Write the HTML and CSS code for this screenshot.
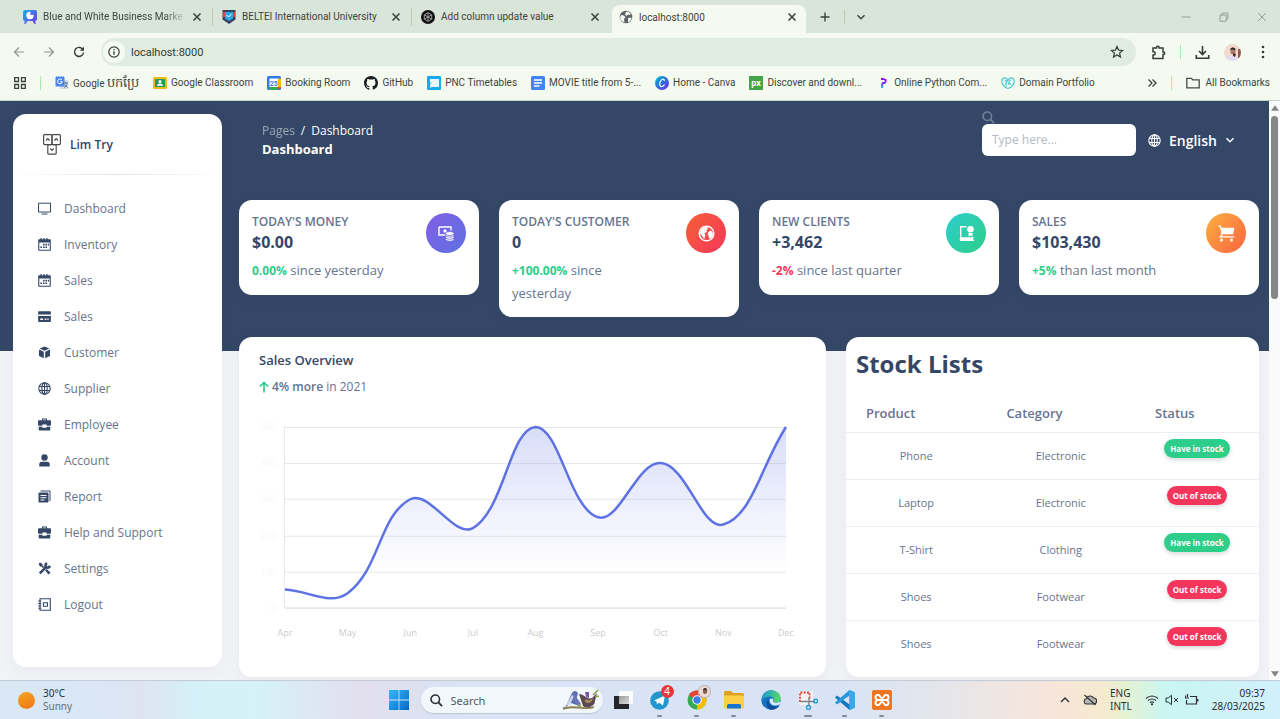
FILE: index.html
```html
<!DOCTYPE html>
<html lang="en">
<head>
    <meta charset="UTF-8">
    <meta name="viewport" content="width=device-width, initial-scale=1.0">
    <title>localhost:8000</title>
    <link rel="stylesheet" href="styles.css">
</head>
<body>

<!-- Shared icons -->
<svg class="sprite" aria-hidden="true">
    <symbol id="i-close" viewBox="0 0 10 10"><path d="M1.5 1.5l7 7M8.5 1.5l-7 7" fill="none" stroke="currentColor" stroke-width="1.6"/></symbol>
    <symbol id="i-chevron" viewBox="0 0 10 10"><path d="M1.5 3.2L5 6.7l3.5-3.5" fill="none" stroke="currentColor" stroke-width="1.5"/></symbol>
    <symbol id="i-calendar" viewBox="0 0 13 13"><path fill-rule="evenodd" d="M1 1.2h1.5V0h1.200v1.200h1.700V0h1.200v1.200h1.800V0h1.200v1.200H12a.8.8 0 0 1 .8.8v10a.8.8 0 0 1-.8.8H1a.8.8 0 0 1-.8-.8V2A.8.8 0 0 1 1 1.200zm.3 3.300v7.200h10.400V4.500z"/><path d="M5 5.800h1.600v1.600H5zM7.400 5.800H9v1.600H7.400zM9.800 5.800h1.300v1.600H9.800zM2.400 8.400H4V10H2.400zM5 8.400h1.600V10H5zM7.400 8.400H9V10H7.400z"/></symbol>
    <symbol id="i-globe" viewBox="0 0 13 13"><g fill="none" stroke="currentColor" stroke-width="1.1"><circle cx="6.5" cy="6.5" r="5.700"/><ellipse cx="6.5" cy="6.5" rx="2.700" ry="5.700"/><path d="M6.5.8v11.400M1 4.500h11M1 8.500h11"/></g></symbol>
    <symbol id="i-briefcase" viewBox="0 0 13 13"><path d="M4 2.200V.4h5v1.800h3a1 1 0 0 1 1 1v3.600a1 1 0 0 1-1 1H8.600V6.400H4.400v1.400H1a1 1 0 0 1-1-1V3.200a1 1 0 0 1 1-1zm1.100 0h2.800V1.400H5.100zM.7 8.800h3.700v1h4.200v-1h3.700v3a.8.8 0 0 1-.8.8h-10a.8.8 0 0 1-.8-.8z"/></symbol>
    <symbol id="i-search" viewBox="0 0 14 14"><circle cx="5.700" cy="5.700" r="4.600" fill="none" stroke="currentColor" stroke-width="1.700"/><path d="M9 9l4 4" stroke="currentColor" stroke-width="2"/></symbol>
</svg>

<!-- Browser window -->
<header class="browser">
    <div class="tab-strip">
        <div class="tab">
            <svg class="favicon" viewBox="0 0 14 14"><defs><linearGradient id="g-chart" x1="0" y1="0" x2="1" y2="1"><stop offset="0" stop-color="#12b5dc"/><stop offset="1" stop-color="#7a2ff0"/></linearGradient></defs><path d="M2 0h10a2 2 0 0 1 2 2v7a2 2 0 0 1-2 2l1 2.500-1.500.5L9.500 11H4.500l-2 3L1 13.500 2 11a2 2 0 0 1-2-2V2a2 2 0 0 1 2-2z" fill="url(#g-chart)"/><circle cx="7" cy="5.500" r="3.700" fill="#fff"/><path d="M7.400 1.500v3.600h3.600A3.700 3.700 0 0 0 7.400 1.500z" fill="#5a6df0"/></svg>
            <span class="tab-title faded-end">Blue and White Business Marke</span>
            <button class="icon-btn" aria-label="Close tab"><svg class="x"><use href="#i-close"/></svg></button>
        </div>
        <div class="tab">
            <svg class="favicon" viewBox="0 0 14 14"><path d="M.5 0h13v9.500L7 14 .5 9.500z" fill="#34425f"/><path d="M1 2h12v5H1z" fill="#e8413b"/><path d="M3 2h8v6.500L7 11 3 8.500z" fill="#36a3e4"/><path d="M4.500 5l2 2 3-3" fill="none" stroke="#fff"/></svg>
            <span class="tab-title">BELTEI International University</span>
            <button class="icon-btn" aria-label="Close tab"><svg class="x"><use href="#i-close"/></svg></button>
        </div>
        <div class="tab">
            <svg class="favicon" viewBox="0 0 14 14"><circle cx="7" cy="7" r="7" fill="#111"/><g fill="none" stroke="#b5b5b5" stroke-width=".8"><path d="M7 2.700l3.700 2.100v4.300L7 11.300 3.300 9.100V4.800z"/><path d="M7 2.700v4.300l3.700 2.100M3.300 4.800L7 7l-3.700 2.100M10.700 4.800L7 7v4.300"/></g></svg>
            <span class="tab-title">Add column update value</span>
            <button class="icon-btn" aria-label="Close tab"><svg class="x"><use href="#i-close"/></svg></button>
        </div>
        <div class="tab tab-active">
            <svg class="favicon" viewBox="0 0 14 14"><circle cx="7" cy="7" r="6.300" fill="#5c6268"/><path d="M2 5l3 .5 1.500 1.800L5 9l.5 3.500C3 12 1 9.500 1.200 7zM7 2l2-.6 3 2.600-1.500 1L9 4.500 7.500 6 6 4.500zM9 8l3.500-.5c0 2-1.500 4.300-3.500 5z" fill="#f4faf0"/></svg>
            <span class="tab-title">localhost:8000</span>
            <button class="icon-btn" aria-label="Close tab"><svg class="x"><use href="#i-close"/></svg></button>
        </div>
        <button class="icon-btn new-tab" aria-label="New tab"><svg viewBox="0 0 10 10"><path d="M5 .5v9M.5 5h9" stroke="currentColor" stroke-width="1.400"/></svg></button>
        <span class="tab-rule"></span>
        <button class="icon-btn tab-search" aria-label="Search tabs"><svg><use href="#i-chevron"/></svg></button>
        <div class="window-controls">
            <button class="icon-btn" aria-label="Minimize"><svg viewBox="0 0 10 10"><path d="M.5 5h9" stroke="currentColor" stroke-width=".9"/></svg></button>
            <button class="icon-btn" aria-label="Restore"><svg viewBox="0 0 10 10"><path d="M1 3h6.200v6.200H1zM3 3V1.400Q3 1 3.500 1H9v5.700q0 .5-.5.5H7.200" fill="none" stroke="currentColor" stroke-width=".9"/></svg></button>
            <button class="icon-btn" aria-label="Close"><svg viewBox="0 0 10 10"><path d="M1 1l8 8M9 1L1 9" stroke="currentColor" stroke-width=".9"/></svg></button>
        </div>
    </div>

    <div class="toolbar">
        <button class="icon-btn nav-btn faded" aria-label="Back"><svg viewBox="0 0 12 12"><path d="M6 1.500L1.500 6 6 10.500M1.500 6H11" fill="none" stroke="currentColor" stroke-width="1.200"/></svg></button>
        <button class="icon-btn nav-btn faded" aria-label="Forward"><svg viewBox="0 0 12 12"><path d="M6 1.500L10.500 6 6 10.500M10.500 6H1" fill="none" stroke="currentColor" stroke-width="1.200"/></svg></button>
        <button class="icon-btn nav-btn" aria-label="Reload"><svg viewBox="0 0 12 12"><path d="M10 3.800A4.500 4.500 0 1 0 10.500 6.500" fill="none" stroke="currentColor" stroke-width="1.400"/><path d="M11 .8v4H7z" fill="currentColor"/></svg></button>
        <div class="address-bar">
            <button class="icon-btn site-info" aria-label="Site information"><svg viewBox="0 0 12 12"><circle cx="6" cy="6" r="5.200" fill="none" stroke="currentColor" stroke-width="1.200"/><path d="M6 5.300v3.500M6 3v1.200" stroke="currentColor" stroke-width="1.300"/></svg></button>
            <input class="address" type="text" value="localhost:8000" aria-label="Address">
            <button class="icon-btn star" aria-label="Bookmark"><svg viewBox="0 0 14 14"><path d="M7 1.500l1.600 3.700 4 .3-3 2.600.9 3.900L7 9.900 3.500 12l.9-3.900-3-2.600 4-.3z" fill="none" stroke="currentColor" stroke-width="1.200"/></svg></button>
        </div>
        <button class="icon-btn tool" aria-label="Extensions"><svg viewBox="0 0 15 15"><path d="M2 3h3.500V2.500a1.300 1.300 0 0 1 2.600 0V3H12v4h.5a1.200 1.200 0 0 1 0 2.400H12V13.500H2V10h.6a1.500 1.500 0 0 0 0-3.200H2z" fill="none" stroke="currentColor" stroke-width="1.500"/></svg></button>
        <span class="green-rule"></span>
        <button class="icon-btn tool" aria-label="Downloads"><svg viewBox="0 0 15 15"><path d="M7.500 1v8M4 6l3.500 3.500L11 6M1.300 10v3.300h12.400V10" fill="none" stroke="currentColor" stroke-width="1.600"/></svg></button>
        <button class="icon-btn profile" aria-label="Profile"><svg viewBox="0 0 17 17"><defs><clipPath id="c-face"><circle cx="8.500" cy="8.500" r="8.500"/></clipPath></defs><g clip-path="url(#c-face)"><path d="M0 0h17v17H0z" fill="#f0d9cf"/><path d="M14 5h3v9h-3z" fill="#8c5a50"/><ellipse cx="9" cy="7" rx="2.600" ry="3.500" fill="#ad7b62"/><path d="M6 6C6 2.500 12 2.500 11.500 6L8 5.500z" fill="#332a2a"/><path d="M3 17c0-5 3-6 5.500-6s5 2 5 6z" fill="#e3def4"/><path d="M9 9l3 1-1 3-2-1z" fill="#4b302c"/></g></svg></button>
        <button class="icon-btn menu" aria-label="Menu"><svg viewBox="0 0 4 14"><g fill="currentColor"><circle cx="2" cy="2" r="1.300"/><circle cx="2" cy="7" r="1.300"/><circle cx="2" cy="12" r="1.300"/></g></svg></button>
    </div>

    <nav class="bookmarks">
        <button class="icon-btn apps" aria-label="Apps"><svg viewBox="0 0 12 12"><path d="M.7.7h3.800v3.800H.7zM7.500.7h3.800v3.800H7.500zM.7 7.500h3.800v3.800H.7zM7.500 7.500h3.800v3.800H7.500z" fill="none" stroke="currentColor" stroke-width="1.300"/></svg></button>
        <span class="green-rule"></span>
        <a class="bookmark" href="#"><svg viewBox="0 0 14 14"><rect x="5" y="4" width="8.500" height="9" rx="1" fill="#d6dbe2"/><rect x=".5" y=".5" width="9" height="10" rx="1" fill="#4a86ee"/><path d="M7 4A2.400 2.400 0 1 0 7.400 5.700H5.200" fill="none" stroke="#fff"/><path d="M8 7h5M10.500 6v1M9 11.500c1.500-.5 2.800-2 3-4.500M9.500 8.500l3 3" stroke="#4d6d96" fill="none" stroke-width=".9"/></svg><span>Google <span class="khmer" lang="km">បកប្រែ</span></span></a>
        <a class="bookmark" href="#"><svg viewBox="0 0 14 14"><rect y="1" width="14" height="12" rx="1" fill="#f2bb1b"/><rect x="2" y="3" width="10" height="8" fill="#249b5b"/><circle cx="7" cy="5.500" r="1.500" fill="#fff"/><path d="M4 9.700c0-3 6-3 6 0z" fill="#fff"/></svg>Google Classroom</a>
        <a class="bookmark" href="#"><svg viewBox="0 0 14 14"><rect width="14" height="14" rx="1.500" fill="#2f7cec"/><path d="M11 2.500h3V11h-3z" fill="#fbbc05"/><path d="M2.500 11H11v3H2.500z" fill="#34a853"/><path d="M11 11h3l-3 3z" fill="#ea4335"/><path d="M2.500 2.500H11V11H2.500z" fill="#fff"/><text x="6.800" y="9.500" text-anchor="middle" class="cal-text">25</text></svg>Booking Room</a>
        <a class="bookmark" href="#"><svg viewBox="0 0 16 16"><path fill="#1b1f23" d="M8 0C3.580 0 0 3.580 0 8c0 3.540 2.290 6.530 5.470 7.590.4.070.55-.17.55-.38v-1.490c-2.010.37-2.530-.49-2.690-.94-.09-.23-.48-.94-.82-1.130-.28-.15-.68-.52-.01-.53.63-.01 1.080.58 1.230.82.720 1.210 1.870.87 2.330.66.070-.52.280-.87.510-1.070-1.780-.2-3.640-.89-3.640-3.950 0-.87.310-1.590.82-2.150-.08-.2-.36-1.020.08-2.120 0 0 .67-.21 2.200.82a7.600 7.600 0 0 1 4 0c1.530-1.040 2.200-.82 2.200-.82.440 1.100.160 1.920.080 2.120.510.560.820 1.270.820 2.150 0 3.070-1.870 3.750-3.650 3.950.290.250.540.730.540 1.480v2.200c0 .210.150.460.550.380A8 8 0 0 0 16 8c0-4.420-3.580-8-8-8z"/></svg>GitHub</a>
        <a class="bookmark" href="#"><svg viewBox="0 0 14 14"><rect width="14" height="14" rx="1" fill="#19a9ee"/><path d="M3 3h9v8H5l-2 1 .5-3H3V7.500h2L3 6z" fill="#e9f7ff"/></svg>PNC Timetables</a>
        <a class="bookmark" href="#"><svg viewBox="0 0 14 14"><rect width="14" height="14" rx="1.500" fill="#4285f4"/><path d="M3 4h8M3 7h8M3 10h5.500" stroke="#fff" stroke-width="1.400"/></svg>MOVIE title from 5-...</a>
        <a class="bookmark" href="#"><svg viewBox="0 0 14 14"><defs><linearGradient id="g-canva" x1="0" y1="0" x2="1" y2="1"><stop offset="0" stop-color="#00c4cc"/><stop offset=".5" stop-color="#2b6fe0"/><stop offset="1" stop-color="#7d2ae8"/></linearGradient></defs><circle cx="7" cy="7" r="7" fill="url(#g-canva)"/><path d="M9 5c1-2-1.500-2.500-3-.5S4 10 6 10.500s3-1 3.500-2" fill="none" stroke="#fff" stroke-width="1.200"/></svg>Home - Canva</a>
        <a class="bookmark" href="#"><svg viewBox="0 0 14 14"><rect width="14" height="14" fill="#43a547"/><text x="7" y="9.500" text-anchor="middle" class="px-text">px</text></svg>Discover and downl...</a>
        <a class="bookmark" href="#"><svg viewBox="0 0 14 14"><defs><linearGradient id="g-py" x1="0" y1="0" x2="0" y2="1"><stop offset=".4" stop-color="#8a18ee"/><stop offset="1" stop-color="#2bc0ff"/></linearGradient></defs><path d="M5 2h3.500v2H5zM8.500 3h2v3.500h-2zM6 6h3.500v2H6zM5 7.500h2.200V12H5z" fill="url(#g-py)"/></svg>Online Python Com...</a>
        <a class="bookmark" href="#"><svg viewBox="0 0 14 14"><path d="M7 4C4.500.5 1 1.500.8 5c0 4 3.500 6.500 6.200 7.500 2.700-1 6.200-3.500 6.200-7.500C13 1.500 9.500.5 7 4zm0 0C4.500 7 4.500 9 5.500 10.500M10 4C8.500 4.500 7.500 6.500 7.500 8h2.500M7 4L3.500 5" fill="none" stroke="#52cdd2" stroke-width="1.300"/></svg>Domain Portfolio</a>
        <button class="icon-btn more" aria-label="More bookmarks"><svg viewBox="0 0 10 10"><path d="M1.500 1.500L5 5 1.500 8.500M5.500 1.500L9 5 5.500 8.500" fill="none" stroke="currentColor" stroke-width="1.300"/></svg></button>
        <span class="green-rule"></span>
        <a class="bookmark all" href="#"><svg viewBox="0 0 14 14"><path d="M.8 2.300h4.500l1.500 1.500h6.400v8H.8z" fill="none" stroke="#454d45" stroke-width="1.300"/></svg>All Bookmarks</a>
    </nav>
</header>

<!-- Dashboard page -->
<div class="viewport">
    <div class="page">
        <aside class="sidebar">
            <a class="brand" href="#">
                <svg viewBox="0 0 18 21"><g fill="none" stroke="#4a4a4a" stroke-width="1.200"><rect x=".6" y=".6" width="8.400" height="10" rx="1"/><rect x="9" y=".6" width="8.400" height="10" rx="1"/><rect x="4.800" y="10.600" width="8.400" height="9.600" rx="1"/><path d="M3 6.500L4.800 4.700l1.800 1.800M11.400 6.500l1.800-1.800L15 6.500M7.200 14.500L9 16.300l1.800-1.800"/></g></svg>
                <span>Lim Try</span>
            </a>
            <hr class="divider">
            <nav class="menu-list">
                <a href="#"><svg viewBox="0 0 13 13"><path d="M.5 1.200h12v8.800H.5z" fill="none" stroke="currentColor"/><path d="M3.500 12h6" stroke="currentColor"/></svg>Dashboard</a>
                <a href="#"><svg><use href="#i-calendar"/></svg>Inventory</a>
                <a href="#"><svg><use href="#i-calendar"/></svg>Sales</a>
                <a href="#"><svg viewBox="0 0 13 13"><path fill-rule="evenodd" d="M1 1.200h11a.9.9 0 0 1 .9.9V4.500H.1V2.100a.9.9 0 0 1 .9-.9zM.1 6h12.800v5a.9.9 0 0 1-.9.9H1a.9.9 0 0 1-.9-.9zM2.200 8.500V10h3V8.500zm4.600 0V10h1.600V8.500zm2.600 0V10h1.200V8.500z"/></svg>Sales</a>
                <a href="#"><svg viewBox="0 0 13 13"><path d="M6.500.5l4.800 2L6.500 4.700 1.700 2.500zM1 3.600l4.800 2.200v6.500L1 10zM12 3.600L7.200 5.800v6.500L12 10z"/></svg>Customer</a>
                <a href="#"><svg><use href="#i-globe"/></svg>Supplier</a>
                <a href="#"><svg><use href="#i-briefcase"/></svg>Employee</a>
                <a href="#"><svg viewBox="0 0 13 13"><circle cx="6.500" cy="3.500" r="3.200"/><path d="M1.300 12.500V10.300q0-2.500 2.500-2.500h5.400q2.500 0 2.500 2.500v2.200z"/></svg>Account</a>
                <a href="#"><svg viewBox="0 0 13 13"><path fill-rule="evenodd" d="M1.500 2.500h8a1 1 0 0 1 1 1v8a1 1 0 0 1-1 1h-8a1 1 0 0 1-1-1v-8a1 1 0 0 1 1-1zM2.500 5v1h6V5zm0 2.200v1h6v-1zm0 2.200v1h4v-1z"/><path d="M2.500 1H12v10" fill="none" stroke="currentColor"/></svg>Report</a>
                <a href="#"><svg><use href="#i-briefcase"/></svg>Help and Support</a>
                <a href="#"><svg viewBox="0 0 13 13"><path d="M1.800 11.300l6-6M9 1.200a3 3 0 0 0-1 4 3 3 0 0 0 4-1.300" fill="none" stroke="currentColor" stroke-width="2.600"/><path d="M.6 2L2 .6 4.400 2l.2 1.600L6.300 5 5 6.300 3.600 4.600 2 4.400zM7.200 8.500l1.400-1.400 3.900 3.300-2 2.100z"/></svg>Settings</a>
                <a href="#"><svg viewBox="0 0 13 13"><path d="M2 .7h10.300v11.600H2zM5.500 4.700h4v3.600h-4zM.3 3h3M.3 5.500h3M.3 8h3M.3 10.300h3" fill="none" stroke="currentColor" stroke-width="1.100"/></svg>Logout</a>
            </nav>
        </aside>

        <main class="content">
            <div class="topbar">
                <div class="crumbs">
                    <p><a href="#">Pages</a><span>/</span>Dashboard</p>
                    <h1>Dashboard</h1>
                </div>
                <div class="search-box">
                    <label for="page-search" aria-label="Search"><svg><use href="#i-search"/></svg></label>
                    <input id="page-search" type="text" placeholder="Type here...">
                </div>
                <div class="language">
                    <svg class="lang-globe"><use href="#i-globe"/></svg>
                    <select aria-label="Language"><option>English</option></select>
                    <svg class="lang-chevron"><use href="#i-chevron"/></svg>
                </div>
            </div>

            <section class="stats">
                <article class="card stat">
                    <div class="stat-text">
                        <h2>TODAY'S MONEY</h2>
                        <strong>$0.00</strong>
                        <p><b class="up">0.00%</b> since yesterday</p>
                    </div>
                    <span class="stat-icon purple"><svg viewBox="0 0 17 17"><path d="M1 2h12v3.500M7 10H1V2" fill="none" stroke="#fff" stroke-width="1.400"/><circle cx="7" cy="6" r="1.700" fill="#fff"/><g fill="#fff" stroke="#6a66e4" stroke-width=".8"><path d="M7.500 13.500v1c0 2.300 8.500 2.300 8.500 0v-1z"/><path d="M7.500 10.500v2c0 2.300 8.500 2.300 8.500 0v-2z"/><path d="M7.500 8.800v1.500c0 2.300 8.500 2.300 8.500 0V8.800z"/><ellipse cx="11.750" cy="8.500" rx="4.250" ry="2"/></g></svg></span>
                </article>
                <article class="card stat">
                    <div class="stat-text">
                        <h2>TODAY'S CUSTOMER</h2>
                        <strong>0</strong>
                        <p><b class="up">+100.00%</b> since yesterday</p>
                    </div>
                    <span class="stat-icon red"><svg viewBox="0 0 17 17"><circle cx="8.500" cy="8.500" r="7.300" fill="none" stroke="#fff" stroke-width="1.400"/><path d="M6 2.500l3-1 1 2-1.500 2 .5 1.500-2.500 1 .8 2.500-1 3.500-2-2.500L1.800 8 3 4.500zM10.500 7l2-1.500L14.500 7l.5 3-2.500 4-1.500-1-.5-2.500-1-1.500z" fill="#fff"/></svg></span>
                </article>
                <article class="card stat">
                    <div class="stat-text">
                        <h2>NEW CLIENTS</h2>
                        <strong>+3,462</strong>
                        <p><b class="down">-2%</b> since last quarter</p>
                    </div>
                    <span class="stat-icon green"><svg viewBox="0 0 17 17"><path d="M8.500 1.700H2.700v11.800" fill="none" stroke="#fff" stroke-width="1.400"/><path d="M3.500 12.300h12.300v1H15v1.200h.8V16H3.500a1.850 1.850 0 0 1 0-3.700z" fill="#fff"/><circle cx="12.500" cy="4.200" r="3.300" fill="#fff"/><path d="M10.500 8h4v3.500l-2-1-2 1z" fill="#fff"/></svg></span>
                </article>
                <article class="card stat">
                    <div class="stat-text">
                        <h2>SALES</h2>
                        <strong>$103,430</strong>
                        <p><b class="up">+5%</b> than last month</p>
                    </div>
                    <span class="stat-icon orange"><svg viewBox="0 0 17 17"><path d="M2.800 2.800h13.500l-1.200 6.500H4z" fill="#fff"/><path d="M.3 1.200h2.200l1.700 8.300-2 2.300h14" fill="none" stroke="#fff" stroke-width="1.200"/><circle cx="3.500" cy="15" r="1.500" fill="#fff"/><circle cx="13.500" cy="15" r="1.500" fill="#fff"/></svg></span>
                </article>
            </section>

            <section class="panels">
                <article class="card overview">
                    <h2>Sales Overview</h2>
                    <p><svg viewBox="0 0 10 12"><path d="M5 11.500V1.500M1 5.500l4-4 4 4" fill="none" stroke="#2dce89" stroke-width="1.700"/></svg><b>4% more</b> in 2021</p>
                    <svg id="chart" class="chart" viewBox="0 0 548 230" role="img" aria-label="Sales by month">
                        <defs><linearGradient id="g-area" x1="0" y1="0" x2="0" y2="1"><stop offset="0" stop-color="#5e72e4" stop-opacity=".24"/><stop offset=".8" stop-color="#5e72e4" stop-opacity="0"/></linearGradient></defs>
                    </svg>
                </article>

                <article class="card stock">
                    <h2>Stock Lists</h2>
                    <table>
                        <thead>
                            <tr><th>Product</th><th>Category</th><th>Status</th></tr>
                        </thead>
                        <tbody>
                            <tr><td>Phone</td><td>Electronic</td><td><span class="badge in">Have in stock</span></td></tr>
                            <tr><td>Laptop</td><td>Electronic</td><td><span class="badge out">Out of stock</span></td></tr>
                            <tr><td>T-Shirt</td><td>Clothing</td><td><span class="badge in">Have in stock</span></td></tr>
                            <tr><td>Shoes</td><td>Footwear</td><td><span class="badge out">Out of stock</span></td></tr>
                            <tr><td>Shoes</td><td>Footwear</td><td><span class="badge out">Out of stock</span></td></tr>
                        </tbody>
                    </table>
                </article>
            </section>
        </main>
    </div>
    <div class="scrollbar">
        <svg viewBox="0 0 9 6"><path d="M4.500 0L9 6H0z"/></svg>
        <span class="thumb"></span>
        <svg viewBox="0 0 9 6"><path d="M4.500 6L9 0H0z"/></svg>
    </div>
</div>

<!-- Taskbar -->
<footer class="taskbar">
    <div class="weather">
        <span class="sun"></span>
        <p>30°C<br><span>Sunny</span></p>
    </div>
    <div class="apps-row">
        <button class="icon-btn app" aria-label="Start"><svg viewBox="0 0 20 20"><defs><linearGradient id="g-win" x1="0" y1="0" x2="1" y2="1"><stop offset="0" stop-color="#35b8f4"/><stop offset="1" stop-color="#0568c9"/></linearGradient></defs><path d="M0 0h9.600v9.600H0zM10.400 0H20v9.600h-9.600zM0 10.400h9.600V20H0zM10.400 10.400H20V20h-9.600z" fill="url(#g-win)"/></svg></button>
        <div class="task-search">
            <svg class="lens"><use href="#i-search"/></svg>
            <input type="text" placeholder="Search" aria-label="Search">
            <svg class="bird" viewBox="0 0 40 22"><path d="M1 19l6-2 5-11c2-5 5-5 7-2l-2 7 3 6-8-3-4 3z" fill="#5a6fae"/><path d="M7 16l6-10 2 1-4 9z" fill="#cfd6ec"/><path d="M14 3l8 12-2 3-5-6z" fill="#6b76b8"/><path d="M4 20c8-5 22 2 31-2" fill="none" stroke="#8a7a4c" stroke-width="1.800"/><path d="M20 5c6 0 7 6 13 4l5-5-2 8c0 6-9 8-12 5z" fill="#5b4a52"/><path d="M26 10c3 2 6 1 8-1-1 5-5 6-8 4z" fill="#a58a63"/><path d="M26 3h4v6l-3-1z" fill="#7b58a6"/><path d="M34 6l5-5M36 8l4-1M19 15l5 5" stroke="#8fa24b" stroke-width="1.500"/></svg>
        </div>
        <button class="icon-btn app" aria-label="Task view"><svg viewBox="0 0 20 20"><defs><linearGradient id="g-task" x1="0" y1="0" x2="1" y2="1"><stop offset="0" stop-color="#999"/><stop offset="1" stop-color="#ddd"/></linearGradient></defs><path d="M6 1h14v13H6z" fill="#fbfbfb"/><path d="M1 6h15v13H1z" fill="#25262a"/><path d="M6 6h10v8H6z" fill="url(#g-task)"/></svg></button>
        <button class="icon-btn app open" aria-label="Telegram"><svg viewBox="0 0 20 20"><circle cx="9.500" cy="10.500" r="9.300" fill="#2196cf"/><path d="M4 10.500l11-5-2 10-4-3-2 2-.5-3z" fill="#fff"/></svg><span class="count">4</span></button>
        <button class="icon-btn app open" aria-label="Chrome"><svg viewBox="0 0 20 20"><circle cx="10" cy="10" r="9.500" fill="#34a853"/><path d="M10 10L1.800 5.200A9.500 9.500 0 0 1 18.200 5.200z" fill="#ea4335"/><path d="M10 10l8.200-4.800A9.500 9.500 0 0 1 10 19.500z" fill="#fbbc05"/><circle cx="10" cy="10" r="4.700" fill="#fff"/><circle cx="10" cy="10" r="3.700" fill="#3b7ded"/></svg><svg class="mini-face" viewBox="0 0 12 12"><circle cx="6" cy="6" r="5.600" fill="#eadbd4" stroke="#bdb8ba"/><ellipse cx="6.500" cy="5.500" rx="2" ry="2.800" fill="#86604e"/><path d="M4.500 4.500q2-3.500 4 0z" fill="#333"/></svg></button>
        <button class="icon-btn app open" aria-label="File Explorer"><svg viewBox="0 0 20 20"><path d="M0 2.500q0-1.500 1.500-1.500H7l2 2h9.500Q20 3 20 4.500V8H0z" fill="#dfa11e"/><path d="M0 6.500q0-1 1-1h18q1 0 1 1V17q0 1.500-1.500 1.500h-17Q0 18.500 0 17z" fill="#fdce4a"/><path d="M3 18.500v-3q0-1.500 1.500-1.500h11q1.500 0 1.500 1.500v3z" fill="#1874cd"/></svg></button>
        <button class="icon-btn app" aria-label="Edge"><svg viewBox="0 0 20 20"><defs><linearGradient id="g-edge" x1="0" y1="0" x2="1" y2=".3"><stop offset="0" stop-color="#1796dc"/><stop offset="1" stop-color="#55d66a"/></linearGradient></defs><circle cx="10" cy="10" r="9.700" fill="#1272c4"/><path d="M.4 10C1 4 5.500.3 10.500.3c5 0 9.200 3.700 9.200 7.700 0 3-2.200 4.700-5 4.700-1.800 0-3-.7-2.300-1.700C13.600 9 12 6.500 9 6.500c-4 0-7.500 2-8.600 3.500z" fill="url(#g-edge)"/><path d="M8.500 9c-2 3 1 8 6 7.500 2 0 3-.5 4-1-2 3.500-6 4.600-9 4.200-5-2-5-8.700-1-10.700z" fill="#0d4f9d"/><path d="M8.700 9.200C9.500 8.300 12 8 12.300 9.500c.2 1.200-.9 1.500.2 2.600 1.500 1 4.300.7 6-.7l1.200 1.600c-2 3-8 3.500-10 .8-1-1.400-1.400-3.200-1-4.600z" fill="#d8e7f5"/></svg></button>
        <button class="icon-btn app open wide" aria-label="Snipping Tool"><svg viewBox="0 0 20 20"><path d="M1 1h14v14H1z" fill="#f3f1f2"/><path d="M2 12V2.500h9.500V9" fill="none" stroke="#e2413b" stroke-width="1.800" stroke-dasharray="2 1.300"/><path d="M3 11.500h14M11 8v8" stroke="#7e8288" stroke-width="1.400"/><circle cx="10.500" cy="17.500" r="2" fill="none" stroke="#219bd7" stroke-width="1.400"/><circle cx="17.700" cy="11" r="1.900" fill="none" stroke="#219bd7" stroke-width="1.400"/></svg></button>
        <button class="icon-btn app open" aria-label="Visual Studio Code"><svg viewBox="0 0 20 20"><path d="M14.500 0L20 2.500v15L14.500 20 0 7.500 2 5.500l12.500 9z" fill="#1477bd"/><path d="M14.500 0L0 12.500l2 2 12.500-9z" fill="#2699dd"/><path d="M14.500 0L20 2.500v15L14.500 20z" fill="#3aa8ec"/></svg></button>
        <button class="icon-btn app open" aria-label="XAMPP"><svg viewBox="0 0 20 20"><rect width="20" height="20" rx="2" fill="#ee7623"/><path d="M6.500 10h7M6.500 10C2 10 3 4 6.500 5c2 .6 1.500 3 3.500 3s1.500-2.400 3.500-3c3.500-1 4.500 5 0 5 4.500 0 3.500 6 0 5-2-.6-1.500-3-3.500-3s-1.500 2.400-3.500 3c-3.500 1-4.500-5 0-5z" fill="none" stroke="#fff" stroke-width="2"/></svg></button>
    </div>
    <div class="tray">
        <button class="icon-btn" aria-label="Hidden icons"><svg class="up-arrow" viewBox="0 0 10 10"><path d="M1 7l4-4 4 4" fill="none" stroke="currentColor" stroke-width="1.300"/></svg></button>
        <svg class="cloud" viewBox="0 0 14 12"><path d="M3.500 10a2.700 2.700 0 0 1-.3-5.300A4 4 0 0 1 10.500 4a3 3 0 0 1 .3 6z" fill="#b5b5b2" stroke="#333" stroke-width="1.100"/><path d="M1.500 1l11 10" stroke="#333" stroke-width="1.200"/></svg>
        <p class="lang">ENG<br>INTL</p>
        <div class="status">
            <svg viewBox="0 0 14 12"><path d="M1 4.500a8.500 8.500 0 0 1 12 0M3 6.700a5.700 5.700 0 0 1 8 0M5 8.700a2.800 2.800 0 0 1 4 0" fill="none" stroke="currentColor" stroke-width="1.100"/><circle cx="7" cy="10.300" r="1.100" fill="currentColor"/></svg>
            <svg viewBox="0 0 14 12"><path d="M1 4h2.200L6.500 1.300v9.400L3.200 8H1zM9 4l4 4M13 4L9 8" fill="none" stroke="currentColor"/></svg>
            <svg viewBox="0 0 14 12"><path d="M5 2.500h6.500v7.500h-10V6M12.800 5v2.500M2.500 0v3M.5 1.500v2.500h3.500" fill="none" stroke="currentColor" stroke-width="1.200"/></svg>
        </div>
        <p class="clock">09:37<br>28/03/2025</p>
    </div>
</footer>

<script src="script.js"></script>
</body>
</html>
```

FILE: styles.css
```css
/* Reset */
*, *::before, *::after {
    margin: 0;
    padding: 0;
    box-sizing: border-box;
}

:root {
    --navy: #344767;
    --slate: #67748e;
    --green: #2dce89;
    --red: #f5365c;
    --page: #f1f3f6;
    --tabs: #dae5da;
    --toolbar: #f4faf0;
    --address: #e1ece0;
}

body {
    display: flex;
    flex-direction: column;
    height: 100vh;
    overflow: hidden;
    font-family: "Open Sans", sans-serif;
    color: var(--slate);
}

a {
    color: inherit;
    text-decoration: none;
}

svg {
    flex: none;
    fill: currentColor;
}

input, select, button {
    font: inherit;
    color: inherit;
    background: none;
    border: none;
    outline: none;
}

.sprite {
    display: none;
}

.icon-btn {
    display: flex;
    align-items: center;
    justify-content: center;
    flex: none;
    cursor: pointer;
}

/* Browser window */
.browser {
    flex: none;
    font-family: Roboto, "Noto Sans", sans-serif;
    font-size: 10px;
    color: #3c443c;
    background: var(--toolbar);
    border-bottom: 1px solid #c6d3cb;
}

.tab-strip {
    display: flex;
    align-items: center;
    height: 33px;
    padding-left: 14px;
    background: var(--tabs);
}

.tab {
    display: flex;
    align-items: center;
    gap: 6px;
    width: 199px;
    height: 18px;
    padding: 0 10px 0 9px;
    border-right: 1px solid #bccabc;
}

.tab:nth-child(3) {
    border-right-color: transparent;
}

.tab-active {
    align-self: flex-end;
    width: 194px;
    height: 28px;
    margin-left: 1px;
    padding: 0 9px 4px 7px;
    background: var(--toolbar);
    border: none;
    border-radius: 8px 8px 0 0;
}

.favicon {
    width: 14px;
    height: 14px;
}

.tab-title {
    flex: 1;
    white-space: nowrap;
}

.faded-end {
    mask-image: linear-gradient(90deg, #000 85%, transparent);
}

.x {
    width: 10px;
    height: 10px;
}

.new-tab {
    width: 38px;
}

.new-tab svg, .tab-search svg {
    width: 10px;
    height: 10px;
}

.tab-rule {
    width: 1px;
    height: 14px;
    background: #bccabc;
}

.tab-search {
    width: 32px;
}

.window-controls {
    display: flex;
    gap: 28px;
    margin-left: auto;
    padding-right: 13px;
    color: #8d968d;
}

.window-controls svg {
    width: 10px;
    height: 10px;
}

.toolbar {
    display: flex;
    align-items: center;
    height: 38px;
    padding: 0 15px 0 4px;
    color: #333c33;
}

.nav-btn {
    width: 30px;
}

.nav-btn svg {
    width: 12px;
    height: 12px;
}

.faded {
    color: #8f988f;
}

.address-bar {
    display: flex;
    align-items: center;
    flex: 1;
    height: 28px;
    margin: 0 15px 0 7px;
    padding: 0 12px 0 2px;
    border-radius: 14px;
    background: var(--address);
    font-size: 11px;
}

.site-info {
    width: 22px;
    height: 22px;
    border-radius: 50%;
    background: var(--toolbar);
}

.site-info svg {
    width: 12px;
    height: 12px;
}

.address {
    flex: 1;
    min-width: 0;
    padding: 0 6px;
}

.star svg {
    width: 14px;
    height: 14px;
}

.tool svg {
    width: 15px;
    height: 15px;
}

.green-rule {
    flex: none;
    width: 1px;
    height: 14px;
    background: #a5eeb0;
}

.toolbar .green-rule {
    margin: 0 14px;
}

.profile {
    margin: 0 20px 0 14px;
}

.profile svg {
    width: 17px;
    height: 17px;
}

.menu svg {
    width: 4px;
    height: 14px;
}

.bookmarks {
    display: flex;
    align-items: center;
    gap: 14px;
    height: 29px;
    padding: 0 10px 5px 14px;
    white-space: nowrap;
}

.bookmark {
    display: flex;
    align-items: center;
    gap: 4px;
    line-height: 14px;
}

.bookmark svg {
    width: 14px;
    height: 14px;
}

.khmer {
    font-size: 13px;
}

.cal-text {
    font-size: 7px;
    font-weight: 700;
    fill: #2f7cec;
}

.px-text {
    font-size: 9px;
    font-weight: 700;
    fill: #ffffff;
}

.apps svg {
    width: 12px;
    height: 12px;
}

.more {
    margin-left: auto;
}

.more svg {
    width: 10px;
    height: 10px;
}

.all {
    gap: 6px;
}

/* Page */
.viewport {
    display: flex;
    flex: 1;
    min-height: 0;
    overflow: hidden;
}

.page {
    display: flex;
    flex: 1;
    min-width: 0;
    gap: 17px;
    padding: 13px 10px 13px 13px;
    background: linear-gradient(var(--navy) 250px, var(--page) 250px);
}

.scrollbar {
    display: flex;
    flex-direction: column;
    align-items: center;
    width: 11px;
    padding: 4px 0 3px;
    background: #fafafa;
    color: #858585;
}

.scrollbar svg {
    width: 8px;
    height: 6px;
}

.thumb {
    width: 7px;
    height: 32%;
    margin: 5px 0 auto;
    border-radius: 4px;
    background: #858585;
}

.card {
    border-radius: 13px;
    background: #ffffff;
    box-shadow: 0 4px 16px rgba(50, 60, 80, 0.05);
}

/* Sidebar */
.sidebar {
    flex: none;
    width: 209px;
    border-radius: 13px;
    background: #ffffff;
    box-shadow: 0 4px 16px rgba(50, 60, 80, 0.05);
    overflow: hidden;
}

.brand {
    display: flex;
    align-items: center;
    gap: 9px;
    height: 60px;
    padding-left: 30px;
    color: var(--navy);
    font-size: 12px;
    font-weight: 600;
}

.brand svg {
    width: 18px;
    height: 21px;
}

.divider {
    height: 1px;
    border: none;
    background: linear-gradient(90deg, transparent, #dfe2e6, transparent);
}

.menu-list {
    padding: 15px 0 0 25px;
}

.menu-list a {
    display: flex;
    align-items: center;
    gap: 13px;
    height: 36px;
    font-size: 12px;
}

.menu-list svg {
    width: 13px;
    height: 13px;
    color: var(--navy);
}

/* Topbar */
.content {
    flex: 1;
    min-width: 0;
}

.topbar {
    display: flex;
    align-items: center;
    height: 86px;
    padding: 0 24px 34px 23px;
    color: #ffffff;
}

.crumbs {
    flex: 1;
    font-size: 12px;
    line-height: 19px;
}

.crumbs a {
    opacity: 0.5;
}

.crumbs span {
    padding: 0 6px;
}

.crumbs h1 {
    font-size: 13px;
    font-weight: 700;
}

.search-box {
    display: flex;
    flex-direction: column;
    width: 154px;
    padding-bottom: 14px;
}

.search-box label {
    height: 13px;
    color: #73809a;
}

.search-box svg {
    display: block;
    width: 13px;
    height: 13px;
}

.search-box input {
    height: 32px;
    padding: 0 10px;
    border-radius: 6px;
    background: #ffffff;
    color: #495057;
    font-size: 12px;
}

.search-box input::placeholder {
    color: #b4bac2;
}

.language {
    display: flex;
    align-items: center;
    gap: 8px;
    margin-left: 12px;
    font-size: 14px;
    font-weight: 600;
}

.language select {
    appearance: none;
}

.lang-globe {
    width: 13px;
    height: 13px;
}

.lang-chevron {
    width: 10px;
    height: 10px;
}

/* Stat cards */
.stats {
    display: grid;
    grid-template-columns: repeat(4, 1fr);
    align-items: start;
    gap: 20px;
}

.stat {
    display: flex;
    justify-content: space-between;
    padding: 13px;
}

.stat-text {
    flex: 0 0 66%;
}

.stat h2 {
    font-size: 12px;
    font-weight: 600;
    line-height: 18px;
    white-space: nowrap;
}

.stat strong {
    display: block;
    margin-bottom: 6px;
    color: var(--navy);
    font-size: 16px;
    line-height: 22px;
}

.stat p {
    font-size: 13px;
    line-height: 22px;
}

.stat b {
    font-size: 12px;
}

.up {
    color: var(--green);
}

.down {
    color: var(--red);
}

.stat-icon {
    display: flex;
    align-items: center;
    justify-content: center;
    flex: none;
    width: 40px;
    height: 40px;
    border-radius: 50%;
}

.stat-icon svg {
    width: 17px;
    height: 17px;
}

.purple {
    background: linear-gradient(310deg, #5e72e4, #825ee4);
}

.red {
    background: linear-gradient(310deg, #f5365c, #f56036);
}

.green {
    background: linear-gradient(310deg, #2dce89, #2dcecc);
}

.orange {
    background: linear-gradient(310deg, #fb6340, #fbb140);
}

/* Panels */
.panels {
    display: grid;
    grid-template-columns: 27fr 19fr;
    gap: 20px;
    margin-top: 20px;
}

.overview {
    padding: 13px 20px 24px;
}

.overview h2 {
    color: var(--navy);
    font-size: 13px;
    font-weight: 600;
    line-height: 21px;
}

.overview p {
    display: flex;
    align-items: center;
    gap: 3px;
    margin-top: 6px;
    font-size: 12px;
    line-height: 20px;
}

.overview b {
    font-weight: 600;
}

.overview p svg {
    width: 10px;
    height: 12px;
}

.chart {
    display: block;
    width: 100%;
    margin-top: 18px;
}

.grid-line {
    stroke: #e6e7ea;
}

.axis-line {
    stroke: #d3d5d9;
}

.line {
    fill: none;
    stroke: #5e72e4;
    stroke-width: 2.5;
}

.month {
    fill: #cccccc;
    font-size: 9px;
    text-anchor: middle;
}

.tick {
    fill: #f7f8f9;
    font-size: 9px;
    text-anchor: end;
}

/* Stock table */
.stock {
    padding-bottom: 10px;
}

.stock h2 {
    padding: 8px 10px 0;
    color: var(--navy);
    font-size: 24px;
    font-weight: 700;
    line-height: 38px;
}

.stock table {
    width: 100%;
    border-collapse: collapse;
    table-layout: fixed;
    margin-top: 11px;
}

.stock th {
    height: 38px;
    padding: 0 20px;
    font-size: 13px;
    font-weight: 600;
    text-align: left;
}

.stock th:nth-child(1) {
    width: 34%;
}

.stock th:nth-child(2) {
    width: 36%;
}

.stock td {
    height: 47px;
    border-top: 1px solid #eceef1;
    font-size: 11px;
    text-align: center;
}

.stock td:last-child {
    padding-top: 6px;
    vertical-align: top;
}

.badge {
    display: inline-block;
    padding: 0 6px;
    border-radius: 10px;
    color: #ffffff;
    font-size: 8px;
    font-weight: 700;
    line-height: 19px;
    box-shadow: 0 2px 4px rgba(50, 60, 80, 0.2);
}

.in {
    background: var(--green);
}

.out {
    background: var(--red);
}

/* Taskbar */
.taskbar {
    display: grid;
    grid-template-columns: 1fr auto 1fr;
    align-items: center;
    flex: none;
    height: 39px;
    border-top: 1px solid #c3ccd6;
    background: linear-gradient(90deg, #dae8f6 0%, #dae6f5 9%, #e0e3f1 11%, #d4f0f8 15%, #d5f2f9 20%, #e3dfef 28%, #d8e3f4 36%, #d8e4f5 66%, #e6e6ea 74%, #f7e5db 82%, #f6e9d0 86%, #e5f2d2 88%, #c9f5f2 91%, #d0f0fb 100%);
    color: #2b2f33;
    font-family: "Noto Sans", sans-serif;
    font-size: 10px;
    line-height: 13px;
}

.weather {
    display: flex;
    align-items: center;
    gap: 8px;
    padding-left: 18px;
}

.weather p span {
    color: #666e76;
}

.sun {
    width: 17px;
    height: 17px;
    border-radius: 50%;
    background: linear-gradient(160deg, #f5a623, #f07414);
}

.apps-row {
    display: flex;
    align-items: center;
    gap: 17px;
}

.app {
    position: relative;
    width: 20px;
    height: 38px;
}

.app svg {
    width: 20px;
    height: 20px;
}

.open::after {
    content: "";
    position: absolute;
    bottom: 2px;
    width: 5px;
    height: 2px;
    border-radius: 1px;
    background: #858b93;
}

.wide::after {
    width: 8px;
}

.count {
    position: absolute;
    top: 4px;
    right: -4px;
    width: 13px;
    height: 13px;
    border-radius: 50%;
    background: #e2393a;
    color: #ffffff;
    line-height: 13px;
}

.app .mini-face {
    position: absolute;
    top: 4px;
    right: -4px;
    width: 13px;
    height: 13px;
}

.task-search {
    display: flex;
    align-items: center;
    gap: 8px;
    width: 182px;
    height: 26px;
    margin: 0 -7px 0 -5px;
    padding: 0 4px 0 9px;
    border-radius: 13px;
    background: #f2f7fc;
    box-shadow: 0 1px 1px #bcc7d2;
}

.task-search input {
    flex: 1;
    min-width: 0;
    font-size: 11px;
}

.task-search input::placeholder {
    color: #50575e;
}

.lens {
    width: 13px;
    height: 13px;
}

.bird {
    width: 40px;
    height: 22px;
}

.tray {
    display: flex;
    align-items: center;
    justify-content: flex-end;
    gap: 13px;
    padding-right: 15px;
}

.up-arrow {
    width: 10px;
    height: 10px;
}

.cloud {
    width: 14px;
    height: 12px;
}

.status {
    display: flex;
    gap: 6px;
}

.status svg {
    width: 14px;
    height: 12px;
}

.clock {
    text-align: right;
}
```

FILE: script.js
```js
// Sales chart
const months = ['Apr', 'May', 'Jun', 'Jul', 'Aug', 'Sep', 'Oct', 'Nov', 'Dec'];
const sales = [50, 40, 300, 220, 500, 250, 400, 230, 500];

const chart = document.getElementById('chart');
const area = { left: 26, right: 528, top: 12, bottom: 193 };
const tension = 0.4;

function draw(tag, attributes, text) {
    const el = document.createElementNS('http://www.w3.org/2000/svg', tag);
    for (const name in attributes) {
        el.setAttribute(name, attributes[name]);
    }
    if (text !== undefined) {
        el.textContent = text;
    }
    chart.appendChild(el);
}

function yFor(value) {
    return area.bottom - (value / 500) * (area.bottom - area.top);
}

function clampY(y) {
    return Math.max(area.top, Math.min(area.bottom, y));
}

// Grid and value labels
for (let value = 0; value <= 500; value += 100) {
    const y = Math.round(yFor(value)) + 0.5;
    draw('line', { x1: area.left, x2: area.right, y1: y, y2: y, class: value ? 'grid-line' : 'axis-line' });
    draw('text', { x: area.left - 9, y: y + 3, class: 'tick' }, value);
}
draw('line', { x1: area.left - 0.5, x2: area.left - 0.5, y1: area.top, y2: area.bottom, class: 'grid-line' });

const points = sales.map((value, i) => ({
    x: area.left + i * (area.right - area.left) / (sales.length - 1),
    y: yFor(value)
}));

// Control points on each side of a point
const controls = points.map((p, i) => {
    const prev = points[i - 1] || p;
    const next = points[i + 1] || p;
    const before = Math.hypot(p.x - prev.x, p.y - prev.y);
    const after = Math.hypot(next.x - p.x, next.y - p.y);
    const a = tension * before / (before + after);
    const b = tension * after / (before + after);
    return {
        inX: p.x - a * (next.x - prev.x),
        inY: clampY(p.y - a * (next.y - prev.y)),
        outX: p.x + b * (next.x - prev.x),
        outY: clampY(p.y + b * (next.y - prev.y))
    };
});

let path = `M${points[0].x} ${points[0].y}`;
for (let i = 1; i < points.length; i++) {
    const from = controls[i - 1];
    const to = controls[i];
    path += ` C${from.outX} ${from.outY} ${to.inX} ${to.inY} ${points[i].x} ${points[i].y}`;
}

draw('path', { d: `${path} V${area.bottom} H${area.left} Z`, fill: 'url(#g-area)' });
draw('path', { d: path, class: 'line' });

months.forEach((month, i) => {
    draw('text', { x: points[i].x, y: 221, class: 'month' }, month);
});
```
